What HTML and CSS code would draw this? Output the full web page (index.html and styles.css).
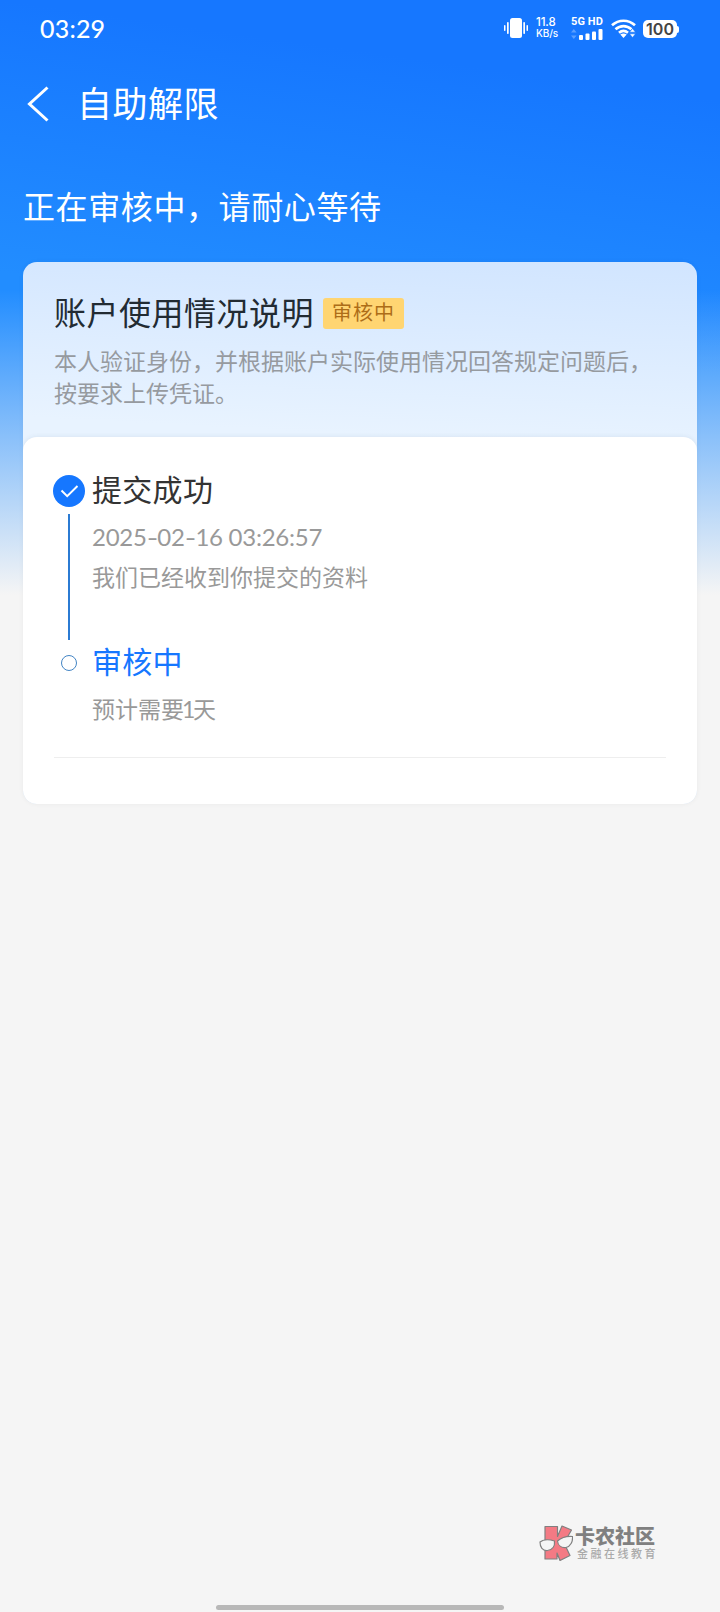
FILE: index.html
```html
<!DOCTYPE html>
<html lang="zh-CN">
<head>
<meta charset="utf-8">
<title>自助解限</title>
<link rel="stylesheet" href="styles.css">
</head>
<body>
<div class="screen">
  <div class="status-bar">
    <span class="clock">03:29</span>
    <div class="status-icons">
      <svg class="vibrate" width="24" height="20" viewBox="0 0 24 20" fill="#fff"><rect x="6" y="0" width="12" height="20" rx="2.5"/><rect x="3" y="4" width="1.7" height="12" rx=".8"/><rect x="0" y="7" width="1.5" height="6" rx=".7"/><rect x="19.3" y="4" width="1.7" height="12" rx=".8"/><rect x="22.5" y="7" width="1.5" height="6" rx=".7"/></svg>
      <div class="speed"><span>11.8</span><span class="unit">KB/s</span></div>
      <div class="cell">
        <span>5G HD</span>
        <svg width="32" height="12" viewBox="0 0 32 12"><path d="M0 4.5 2.8 1l2.8 3.5zM0 7.5 2.8 11l2.8-3.5z" fill="#5b9fff"/><g fill="#fff"><rect x="8" y="7" width="4" height="5" rx="1"/><rect x="14.5" y="5.500" width="4" height="6.500" rx="1"/><rect x="21" y="3.500" width="4" height="8.500" rx="1"/><rect x="27.500" y="1" width="4" height="11" rx="1"/></g></svg>
      </div>
      <svg class="wifi" width="25" height="19" viewBox="0 0 25 19"><g fill="none" stroke="#fff" stroke-width="2.700"><path d="M1 6.300C7.700.2 17.300.2 24 6.300"/><path d="M4.500 10.300c4.800-4.300 11.200-4.300 16 0"/><path d="M8 13.800c2.700-2.300 6.300-2.300 9 0"/></g><path d="M9.300 15.500q3.200-2 6.400 0L12.500 19z" fill="#fff"/><path d="M18.500 13.200 21.500 9.500l3 3.700zM18.500 14.800l3 3.700 3-3.700z" fill="#fff" stroke="#1677ff" stroke-width=".6"/></svg>
      <div class="battery"><span class="level">100</span><i class="tip"></i></div>
    </div>
  </div>
  <header class="nav">
    <svg class="back" width="22" height="36" viewBox="0 0 22 36"><path d="M20.500 1.500 2.500 18l18 16.500" fill="none" stroke="#fff" stroke-width="3"/></svg>
    <h1 class="nav-title">自助解限</h1>
  </header>
  <p class="headline">正在审核中，请耐心等待</p>
  <main class="card">
    <section class="summary">
      <div class="summary-head"><h2 class="summary-title">账户使用情况说明</h2><span class="badge">审核中</span></div>
      <p class="desc">本人验证身份，并根据账户实际使用情况回答规定问题后，<br>按要求上传凭证。</p>
    </section>
    <section class="progress">
      <div class="step">
        <div class="rail">
          <svg width="32" height="32" viewBox="0 0 32 32"><circle cx="16" cy="16" r="16" fill="#1677ff"/><path d="m8.500 15.500 5.700 5.600L24.500 11" fill="none" stroke="#fff" stroke-width="2"/></svg>
          <i class="line"></i>
        </div>
        <div class="step-body">
          <h3 class="step-title">提交成功</h3>
          <p class="note time">2025<span class="dash">-</span>02<span class="dash">-</span>16 03:26:57</p>
          <p class="note">我们已经收到你提交的资料</p>
        </div>
      </div>
      <div class="step current">
        <div class="rail"><i class="dot"></i></div>
        <div class="step-body">
          <h3 class="step-title">审核中</h3>
          <p class="note wait">预计需要<span class="days">1</span>天</p>
        </div>
      </div>
      <hr class="divider">
    </section>
  </main>
  <footer class="footer">
    <div class="brand">
      <svg width="34" height="36" viewBox="0 0 34 36"><g fill="#f47a84" stroke="#808080" stroke-width="1.200" stroke-linejoin="round"><path d="M6 1.500h12.500v10L23 1l9.500 4-7.500 13 6 12.500-10 5-3-7.500V34H6z"/></g><g fill="#f5f5f5" stroke="#808080" stroke-width="1.200"><path d="M1 17c3-2.500 9-3 14.500-1 .5 5-2 9-7 9.500C3.500 26 1 22 1 17z"/><path d="M18.500 16c4-3.500 9.500-5 15-4.500.5 5-2 10-6.500 11-4.500.5-8-2-8.500-6.500z"/></g></svg>
      <div class="brand-text"><span class="brand-name">卡农社区</span><span class="brand-sub">金融在线教育</span></div>
    </div>
    <i class="home-bar"></i>
  </footer>
</div>
</body>
</html>
```
FILE: styles.css
```css
* { box-sizing: border-box; margin: 0; padding: 0; }
body { background: #f5f5f5; font-family: Lato, "Noto Sans CJK SC", sans-serif; }
h1, h2, h3 { font-weight: 400; }
svg, i { display: block; flex: none; }
.screen {
  height: 1612px;
  display: flex;
  flex-direction: column;
  background:
    linear-gradient(180deg, rgba(245,245,245,0) 290px, rgba(245,245,245,.5) 440px, #f5f5f5 595px),
    linear-gradient(188deg, #1677ff 100px, #228dff 370px);
}
.status-bar { height: 56px; padding: 0 41px 0 40px; display: flex; align-items: center; justify-content: space-between; color: #fff; }
.clock { font-size: 25px; line-height: 56px; letter-spacing: .2px; font-weight: 500; }
.status-icons { display: flex; align-items: center; height: 56px; font-family: Inter, sans-serif; }
.speed { display: flex; flex-direction: column; width: 25px; margin-left: 8px; font-size: 12px; line-height: 15px; letter-spacing: -.1px; font-weight: 500; margin-top: -3px; }
.speed .unit { font-size: 10px; line-height: 12px; margin-top: -2px; }
.speed span { font-size: 11.500px; line-height: 14px; }
.cell { width: 33px; margin-left: 10px; font-family: Roboto, sans-serif; font-size: 11px; font-weight: 700; line-height: 11px; white-space: nowrap; letter-spacing: .1px; }
.cell span { display: block; line-height: 12px; margin-top: -1px; }
.wifi { margin-left: 7px; }
.battery { display: flex; align-items: center; margin: 2px 0 0 7px; }
.level { width: 34px; height: 18px; border-radius: 5px; background: #fff; color: #444; font-size: 16px; line-height: 19px; font-weight: 600; text-align: center; }
.tip { width: 2px; height: 7px; background: #fff; border-radius: 0 2px 2px 0; }
.nav { height: 96px; padding: 0 27px; display: flex; align-items: center; gap: 28px; color: #fff; }
.nav-title { font-size: 35px; line-height: 48px; letter-spacing: .5px; padding-bottom: 2px; }
.headline { height: 110px; padding: 31px 23px 0; color: #fff; font-size: 32px; line-height: 48px; letter-spacing: .6px; }
.card { height: 542px; margin: 0 23px; border-radius: 14px; background: linear-gradient(183deg, #d1e5ff, #e8f3ff 190px); box-shadow: 0 0 5px rgba(0,0,0,.05); overflow: hidden; }
.summary { height: 175px; padding: 29px 30px 0 31px; }
.summary-head { display: flex; align-items: center; height: 44px; }
.summary-title { color: #222b33; font-size: 32px; line-height: 44px; letter-spacing: .5px; }
.badge { width: 81px; height: 31px; margin-left: 9px; border-radius: 3px; background: #ffd572; color: #ad6d18; font-size: 20px; line-height: 28px; letter-spacing: 1px; text-align: center; }
.desc { margin-top: 10px; color: #969a9f; font-size: 23px; line-height: 32px; white-space: nowrap; }
.progress { height: 367px; padding: 38px 31px 0 29px; border-radius: 14px; background: #fff; box-shadow: 0 0 5px rgba(50,80,110,.1); }
.step { display: flex; gap: 9px; height: 172px; }
.rail { width: 34px; display: flex; flex-direction: column; align-items: center; }
.line { width: 2px; height: 126px; margin-top: 7px; background: #2b7bd3; }
.step-body { flex: 1; margin: -2px 0 0 -3px; }
.step-title { color: #333; font-size: 30px; line-height: 32px; letter-spacing: .3px; }
.note { margin-top: 8px; color: #999; font-size: 23px; line-height: 32px; }
.time { margin-top: 16px; font-size: 24px; letter-spacing: -.25px; }
.dash { display: inline-block; transform: scaleX(1.3); margin: 0 1px; }
.days { display: inline-block; width: 9px; text-indent: -2px; }
.current { height: 110px; }
.current .step-title { color: #1677ff; }
.dot { width: 16px; height: 16px; margin-top: 8px; border: 1px solid #4385c5; border-radius: 50%; }
.wait { margin-top: 16px; }
.divider { border: 0; height: 1px; margin-left: 2px; background: #eee; }
.footer { margin-top: auto; display: flex; flex-direction: column; align-items: center; }
.brand { align-self: flex-end; display: flex; width: 122px; margin: 0 59px 44px 0; gap: 2px; }
.brand-text { display: flex; flex-direction: column; white-space: nowrap; }
.brand-name { color: #808080; font-size: 20px; line-height: 22px; font-weight: 900; }
.brand-sub { color: #aaa; font-size: 11px; line-height: 13px; letter-spacing: 2.500px; font-weight: 500; margin-left: 2px; }
.home-bar { width: 288px; height: 5px; margin-bottom: 2px; border-radius: 3px; background: #b8b8b8; }
```
